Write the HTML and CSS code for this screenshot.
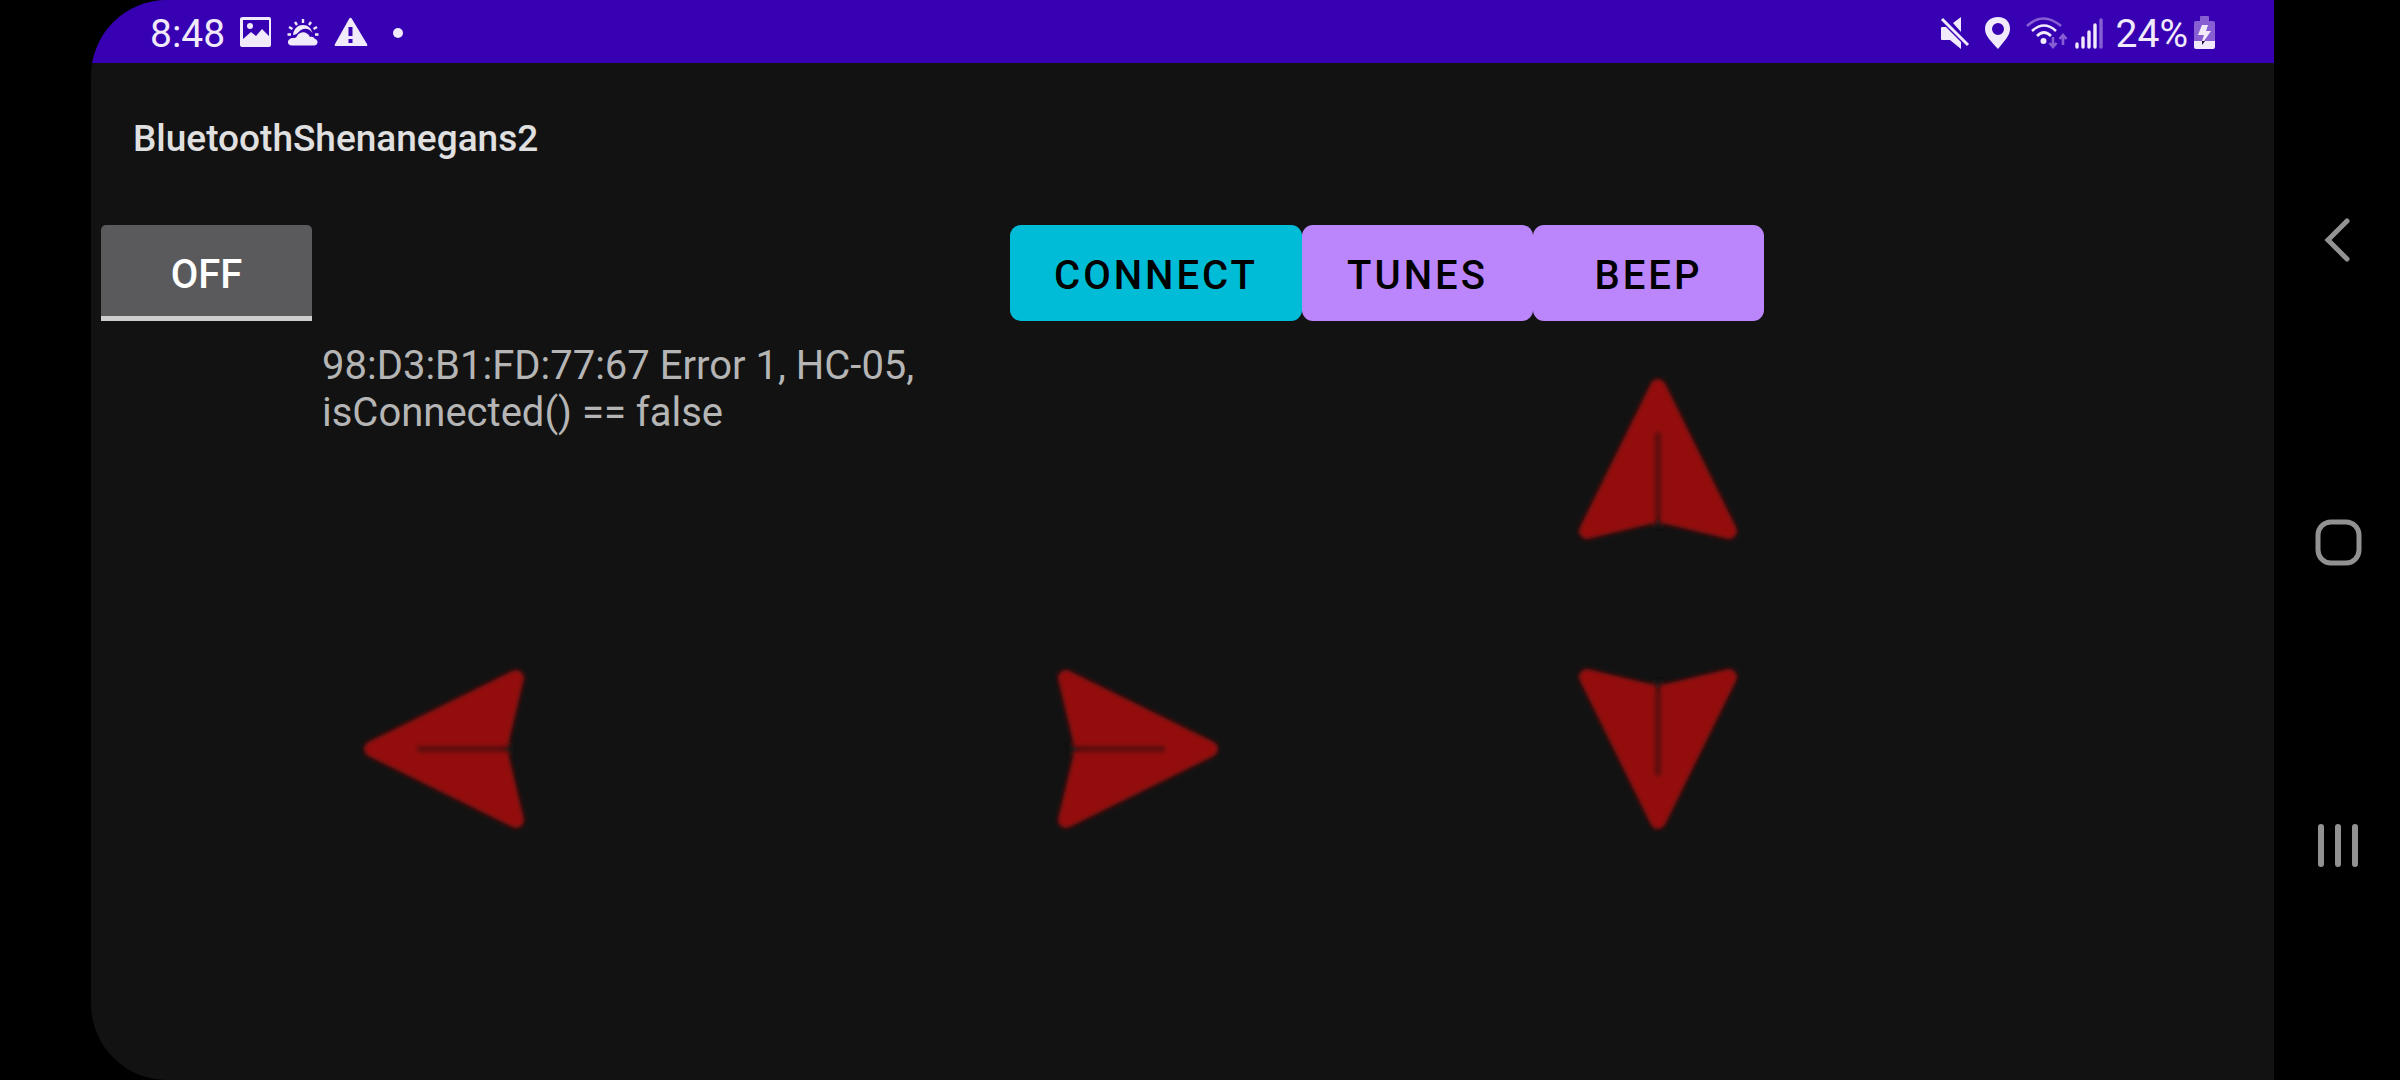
FILE: index.html
```html
<!DOCTYPE html>
<html lang="en">
<head>
<meta charset="utf-8">
<meta name="viewport" content="width=device-width, initial-scale=1">
<title>BluetoothShenanegans2</title>
<link rel="stylesheet" href="styles.css">
</head>
<body>
<svg class="defs" aria-hidden="true">
  <defs>
    <filter id="soft" x="-10%" y="-10%" width="120%" height="120%"><feGaussianBlur stdDeviation="2"/></filter>
    <g id="arrow">
      <g filter="url(#soft)">
        <path d="M80 9L9 153L72 138L80 120L88 138L151 153Z" fill="#940d0e" stroke="#940d0e" stroke-width="16" stroke-linejoin="round"/>
        <path d="M80 54V141" stroke="#5c1011" stroke-width="7"/>
        <path d="M80 138L74 150H86Z" fill="#121212"/>
      </g>
    </g>
  </defs>
</svg>
<div class="device">
  <div class="screen">
    <header class="status">
      <div class="status-side">
        <span class="time">8:48</span>
        <svg class="s-image" width="32" height="32" viewBox="0 0 32 32"><path fill="#f1eafb" fill-rule="evenodd" d="M3 0H29Q31 0 31 2V28Q31 30 29 30H3Q0 30 0 28V2Q0 0 3 0ZM3 3V22L11 15L16 19L22 12L29 19V3Z"/><circle cx="10" cy="9" r="3" fill="#f1eafb"/></svg>
        <svg class="s-weather" width="32" height="32" viewBox="0 0 32 32" fill="none" stroke="#f1eafb"><path stroke-width="2.4" d="M16 2V6M8 5L10 8M24 5L22 8M2 10L5.500 12M30 10L26.500 12M.5 17.500H4M28 17.500H31.500"/><path fill="#f1eafb" stroke="none" d="M6 18C7 11 11 8 16 8C21 8 24 11 25.500 16C22 11 18 11 14 13C11 15 10 18 6 18Z"/><path fill="#f1eafb" stroke="none" d="M5 28.500C-1 28.500 0 21 6 21C8 21 9 21 10 19C13 14 20 14 23 20C26 19 27 21 28 22C32 23 31 28.500 27 28.500Z"/></svg>
        <svg class="s-warn" width="34" height="32" viewBox="0 0 34 32"><path fill="#f1eafb" fill-rule="evenodd" d="M15 2Q16.500-.5 18 2L33 27Q34 29 32 29H2Q0 29 1 27ZM14.500 10V19H18.500V10ZM14.500 22V26H18.500V22Z"/></svg>
        <span class="dot"></span>
      </div>
      <div class="status-side">
        <svg width="30" height="32" viewBox="0 0 30 32" fill="#f1eafb"><path d="M13 6L21 0V15ZM1 11Q1 10 2 10H6L21 25V32L10 23H2Q1 23 1 22Z"/><path d="M2 2L28 28" stroke="#f1eafb" stroke-width="3"/></svg>
        <svg class="s-pin" width="26" height="32" viewBox="0 0 26 32"><path fill="#f1eafb" fill-rule="evenodd" d="M13 32C6 24 0 19 0 12C0 5 5 0 13 0S25 5 25 12C25 19 19 24 13 32ZM13 6A6 6 0 1 0 13 18A6 6 0 0 0 13 6Z"/></svg>
        <svg class="s-wifi" width="42" height="32" viewBox="0 0 42 32" fill="none" stroke="#f1eafb" stroke-width="2.600"><g stroke="#875fd3"><path d="M1 9Q17-6 35 9"/><path d="M27 20V30M23.500 26L27 30L30.500 26M37 28V18M33.500 22L37 18L40.500 22"/></g><path d="M6 14Q18 3 30 14M11 19Q18 12 25 19"/><circle cx="17.500" cy="24" r="3" fill="#f1eafb" stroke="none"/></svg>
        <svg class="s-signal" width="28" height="32" viewBox="0 0 28 32" fill="none" stroke-width="3.400" stroke-linecap="round" stroke="#f1eafb"><path d="M2 27V30M8 21V30M14 15V30M20 8V30"/><path stroke="#875fd3" d="M26 3V30"/></svg>
        <span class="percent">24%</span>
        <svg class="s-battery" width="22" height="34" viewBox="0 0 22 34"><path fill="#875fd3" d="M7 0H14Q15 0 15 1V5H19Q21 5 21 7V25H0V7Q0 5 2 5H6V1Q6 0 7 0Z"/><path fill="#f1eafb" d="M0 25H21V31Q21 33 19 33H2Q0 33 0 31Z"/><path fill="#f1eafb" d="M8 9H14L12 15H17L10 25H8L10 19H4Z"/><path fill="#160b35" d="M8 25H11L8 29Z"/></svg>
      </div>
    </header>
    <h1 class="title">BluetoothShenanegans2</h1>
    <main>
      <div class="buttons">
        <div><button class="toggle" type="button" aria-pressed="false">OFF</button></div>
        <div class="actions">
          <button class="action connect" type="button">CONNECT</button>
          <button class="action" type="button">TUNES</button>
          <button class="action" type="button">BEEP</button>
        </div>
      </div>
      <div class="pad">
        <p class="log">98:D3:B1:FD:77:67 Error 1, HC-05, isConnected() == false</p>
        <button class="arrow up" type="button" aria-label="Forward"><svg width="160" height="162" viewBox="0 0 160 162"><use href="#arrow"/></svg></button>
        <button class="arrow" type="button" aria-label="Left"><svg width="162" height="160" viewBox="0 0 162 160"><use href="#arrow" transform="matrix(0 1 1 0 0 0)"/></svg></button>
        <button class="arrow" type="button" aria-label="Right"><svg width="162" height="160" viewBox="0 0 162 160"><use href="#arrow" transform="matrix(0 1 -1 0 162 0)"/></svg></button>
        <button class="arrow" type="button" aria-label="Back"><svg width="160" height="162" viewBox="0 0 160 162"><use href="#arrow" transform="matrix(1 0 0 -1 0 162)"/></svg></button>
      </div>
    </main>
  </div>
  <nav class="nav" aria-label="System">
    <button type="button" aria-label="Go back"><svg width="48" height="48" viewBox="0 0 48 48" fill="none" stroke="#929292" stroke-width="5" stroke-linecap="round"><path d="M33 5L14 24L33 43"/></svg></button>
    <button type="button" aria-label="Home"><svg width="48" height="48" viewBox="0 0 48 48" fill="none" stroke="#929292" stroke-width="5"><rect x="4" y="4" width="41" height="41" rx="13"/></svg></button>
    <button type="button" aria-label="Recent apps"><svg width="48" height="48" viewBox="0 0 48 48" fill="none" stroke="#929292" stroke-width="6" stroke-linecap="round"><path d="M7 6V43M24 6V43M41 6V43"/></svg></button>
  </nav>
</div>
</body>
</html>
```
FILE: styles.css
```css
* {
  box-sizing: border-box;
}

body {
  margin: 0;
  background: #000;
  font-family: Roboto, "Liberation Sans", sans-serif;
  font-size: 40px;
  line-height: 47px;
}

button {
  border: 0;
  padding: 0;
  background: none;
  font: inherit;
}

svg {
  display: block;
  flex: none;
  overflow: visible;
}

.defs {
  position: absolute;
  width: 0;
  height: 0;
}

.device {
  display: flex;
  min-height: 100vh;
  padding-left: 91px;
}

.screen {
  flex: 1;
  background: #121212;
  border-radius: 76px 0 0 76px;
  overflow: hidden;
}

.status {
  display: flex;
  justify-content: space-between;
  height: 63px;
  padding: 0 58px 0 59px;
  background: #3700b3;
  color: #f1eafb;
  font-size: 39px;
}

.status-side {
  display: flex;
  align-items: center;
  padding-top: 2px;
}

.time,
.percent {
  padding-top: 4px;
}

.s-image,
.s-weather,
.s-warn,
.s-pin,
.s-wifi {
  margin-left: 15px;
}

.percent {
  margin-left: 13px;
}

.s-signal {
  margin-left: 7px;
}

.s-battery {
  margin-left: 6px;
}

.dot {
  width: 10px;
  height: 10px;
  margin-left: 25px;
  border-radius: 50%;
  background: #f1eafb;
}

.title {
  margin: 0;
  padding: 52px 42px 63px;
  color: #e0e0e0;
  font-size: 37px;
  font-weight: 500;
  line-height: 47px;
}

.buttons {
  display: grid;
  grid-template-columns: 42.1% 1fr;
}

.toggle {
  width: 211px;
  height: 96px;
  margin-left: 10px;
  padding-top: 8px;
  border-bottom: 5px solid #cdcdcd;
  border-radius: 5px 5px 0 0;
  background: #5a5a5c;
  color: #fff;
  font-weight: 500;
}

.actions {
  display: flex;
}

.action {
  min-width: 231px;
  height: 96px;
  padding: 4px 44px 0;
  border-radius: 11px;
  background: #bb86fc;
  color: #000;
  font-weight: 500;
  letter-spacing: 3px;
}

.connect {
  background: #00bcd6;
}

.pad {
  display: grid;
  grid-template-columns: 706fr 682fr 357fr 438fr;
  row-gap: 128px;
  justify-items: center;
}

.log {
  grid-column: 1 / 3;
  justify-self: start;
  width: 840px;
  margin: 0;
  padding: 21px 0 0 231px;
  color: #b5b5b5;
}

.up {
  margin-top: 57px;
}

.arrow:nth-of-type(2) {
  grid-column: 1;
}

.nav {
  display: grid;
  grid-template-rows: repeat(3, 1fr);
  width: 126px;
  padding: 89px 0 84px 2px;
}

.nav button {
  display: grid;
  place-items: center;
}
```
